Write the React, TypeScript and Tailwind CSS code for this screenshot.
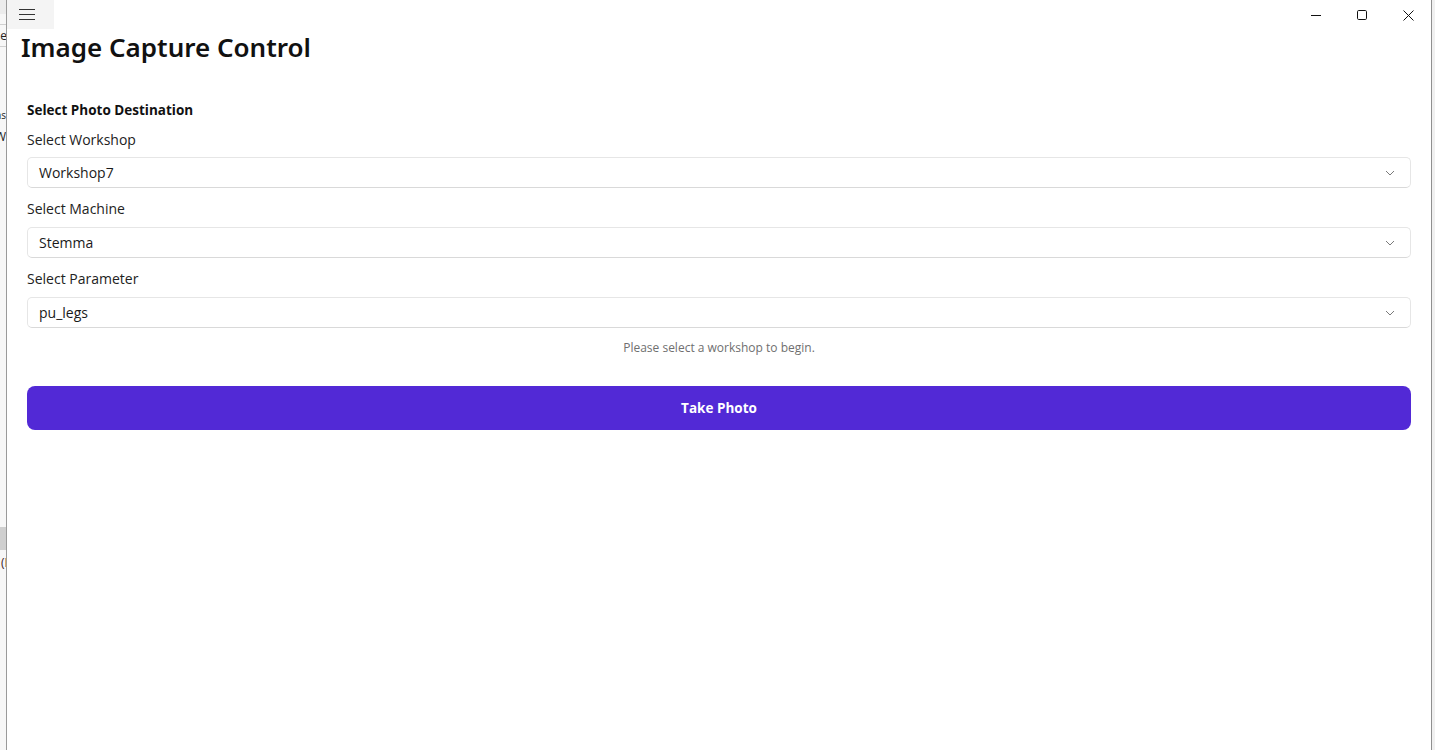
import React from "react";

function Chevron() {
  return (
    <svg width="10" height="6" viewBox="0 0 10 6" className="text-[#7a7a7a]">
      <polyline points="1,1 5,5 9,1" fill="none" stroke="currentColor" strokeWidth="1" />
    </svg>
  );
}

function SelectBox({ value }: { value: string }) {
  return (
    <div className="flex h-[31px] items-center justify-between rounded-[5px] border border-[#e6e6e6] border-b-[#d9d9d9] bg-white pl-[11px] pr-[15px] text-[14px] text-[#1a1a1a]">
      <span>{value}</span>
      <Chevron />
    </div>
  );
}

export default function App() {
  const font = { fontFamily: '"Open Sans", "Noto Sans", sans-serif' };
  return (
    <div className="flex h-[750px] w-[1435px] overflow-hidden bg-white" style={font}>
      {/* background window strip */}
      <div className="relative w-[6px] shrink-0 overflow-hidden bg-[#f7f7f7] text-[12px] text-[#222]">
        <div className="h-[14px] bg-[#ececec]" />
        <div className="absolute left-0 top-[24px] h-px w-full bg-[#d0d0d0]" />
        <div className="absolute left-[-7px] top-[28px] leading-[16px]">ne</div>
        <div className="absolute left-0 top-[46px] h-px w-full bg-[#d0d0d0]" />
        <div className="absolute left-[-8px] top-[108px] text-[10px] leading-[14px]">ms</div>
        <div className="absolute left-[-5px] top-[129px] leading-[16px]">Wi</div>
        <div className="absolute left-0 top-[527px] h-[23px] w-full bg-[#cfcfcf]" />
        <div className="absolute left-[1px] top-[555px] leading-[16px] text-[#3a1a2a]">(I</div>
      </div>
      <div className="w-px shrink-0 bg-[#9a9a9a]" />

      {/* main window */}
      <div className="flex min-w-0 flex-1 flex-col bg-white">
        {/* title bar */}
        <div className="flex h-[30px] items-start justify-between">
          <div className="flex h-[29px] w-[47px] items-center bg-[#f4f4f4] pl-[12px]">
            <svg width="16" height="11" viewBox="0 0 16 11">
              <g stroke="#333" strokeWidth="1">
                <line x1="0" y1="0.5" x2="16" y2="0.5" />
                <line x1="0" y1="5.5" x2="16" y2="5.5" />
                <line x1="0" y1="10.5" x2="16" y2="10.5" />
              </g>
            </svg>
          </div>
          <div className="flex h-[30px]">
            <div className="flex w-[46px] items-center justify-center">
              <svg width="10" height="10" viewBox="0 0 10 10">
                <line x1="0" y1="5.5" x2="10" y2="5.5" stroke="#111" strokeWidth="1" />
              </svg>
            </div>
            <div className="flex w-[46px] items-center justify-center">
              <svg width="10" height="10" viewBox="0 0 10 10">
                <rect x="0.5" y="0.5" width="9" height="9" rx="1.2" fill="none" stroke="#111" strokeWidth="1" />
              </svg>
            </div>
            <div className="flex w-[46px] items-center justify-center">
              <svg width="11" height="11" viewBox="0 0 11 11">
                <g stroke="#111" strokeWidth="1">
                  <line x1="0.5" y1="0.5" x2="10.5" y2="10.5" />
                  <line x1="10.5" y1="0.5" x2="0.5" y2="10.5" />
                </g>
              </svg>
            </div>
          </div>
        </div>

        {/* title */}
        <div className="-mt-[1px] pl-[14px] text-[26px] font-semibold leading-[36px] text-[#111]" style={{ fontFamily: '"Noto Sans", "Open Sans", sans-serif' }}>
          Image Capture Control
        </div>

        {/* form */}
        <div className="mt-[35px] flex flex-col px-5">
          <div className="text-[13.5px] font-bold leading-[20px] text-[#111]">Select Photo Destination</div>

          <div className="mt-[10px] text-[14px] leading-[20px] text-[#222]">Select Workshop</div>
          <div className="mt-[7px]">
            <SelectBox value="Workshop7" />
          </div>

          <div className="mt-[11px] text-[14px] leading-[20px] text-[#222]">Select Machine</div>
          <div className="mt-[8px]">
            <SelectBox value="Stemma" />
          </div>

          <div className="mt-[11px] text-[14px] leading-[20px] text-[#222]">Select Parameter</div>
          <div className="mt-[8px]">
            <SelectBox value="pu_legs" />
          </div>

          <div className="mt-[12px] text-center text-[12px] leading-[16px] text-[#6f6f6f]">
            Please select a workshop to begin.
          </div>

          <button className="mt-[30px] flex h-[44px] items-center justify-center rounded-[8px] bg-[#5229d6] pt-[1px] text-[13.5px] font-bold text-white">
            Take Photo
          </button>
        </div>
      </div>

      <div className="w-px shrink-0 bg-[#8f8f8f]" />
      <div className="w-[3px] shrink-0 bg-[#f0f0f0]" />
    </div>
  );
}
